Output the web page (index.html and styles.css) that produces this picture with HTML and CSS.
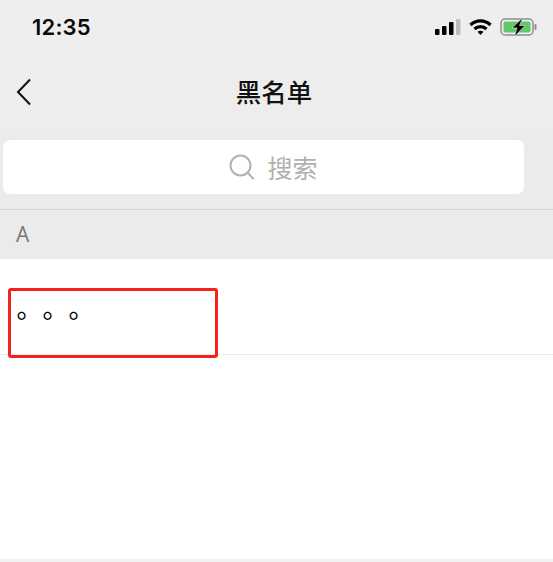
FILE: index.html
```html
<!DOCTYPE html>
<html lang="zh">
<head>
<meta charset="utf-8">
<title>黑名单</title>
<link rel="stylesheet" href="styles.css">
</head>
<body>
<div class="page">
  <header class="status">
    <span class="time">12:35</span>
    <div class="status-icons">
      <svg class="signal" width="26" height="16" viewBox="0 0 26 16"><rect x="0" y="10" width="4.500" height="6" rx="1" fill="#000"/><rect x="7" y="7" width="4.500" height="9" rx="1" fill="#000"/><rect x="14" y="3" width="4.500" height="13" rx="1" fill="#000"/><rect x="21" y="0" width="4.500" height="16" rx="1" fill="#bdbdbd"/></svg>
      <svg class="wifi" width="23" height="18" viewBox="0 0 23 18"><path d="M1.500 7C7 1.500 16 1.500 21.500 7" fill="none" stroke="#000" stroke-width="3.200"/><path d="M5.500 11C8.800 7.800 14.200 7.800 17.500 11" fill="none" stroke="#000" stroke-width="3.200"/><path d="M8.500 13.800C10.200 12.400 12.800 12.400 14.500 13.800L11.500 17Z" fill="#000"/></svg>
      <svg class="battery" width="37" height="20" viewBox="0 0 37 20"><rect x="1" y="2" width="32" height="16" rx="4" fill="none" stroke="#8e8e8e" stroke-width="1.500"/><rect x="3.500" y="4.500" width="27" height="11" rx="2" fill="#5fc965"/><rect x="34.500" y="7" width="2" height="6" rx="1" fill="#8e8e8e"/><path d="M23 0.500 12 11H17L14.500 19.500 25 8.500H19.500Z" fill="#000" stroke="#ededed" stroke-width="0.600"/></svg>
    </div>
  </header>
  <nav class="nav">
    <svg class="back" width="16" height="28" viewBox="0 0 16 28"><path d="M14 1.500 2 14 14 26.500" fill="none" stroke="#111" stroke-width="2"/></svg>
    <h1 class="title">黑名单</h1>
  </nav>
  <div class="search-wrap">
    <div class="search">
      <svg class="search-icon" width="26" height="26" viewBox="0 0 26 26"><circle cx="11.500" cy="11.500" r="10" fill="none" stroke="#b2b2b2" stroke-width="2"/><path d="M18.500 18.500 24.500 25" fill="none" stroke="#b2b2b2" stroke-width="2"/></svg>
      <span class="search-text">搜索</span>
    </div>
  </div>
  <div class="section">A</div>
  <main class="list">
    <div class="row">
      <span class="name">。。。</span>
      <div class="mark"></div>
    </div>
  </main>
  <div class="foot"></div>
</div>
</body>
</html>
```
FILE: styles.css
```css
* { box-sizing: border-box; margin: 0; padding: 0; }
html, body { height: 100%; overflow: hidden; }
body {
  background: #fff;
  font-family: "Liberation Sans", "Noto Sans CJK SC", sans-serif;
}
.page { width: 553px; height: 562px; display: flex; flex-direction: column; background: #ebebeb; }
.status { height: 54px; padding: 16px 16px 0 32px; display: flex; justify-content: space-between; align-items: flex-start; background: #eeeeee; }
.time { font-family: Inter, "Liberation Sans", sans-serif; font-size: 22px; line-height: 22px; font-weight: 600; letter-spacing: 0.2px; color: #0a0a0a; }
.status-icons { display: flex; align-items: center; gap: 8px; padding-top: 1px; }
.nav { height: 76px; display: flex; align-items: center; justify-content: center; position: relative; padding-right: 5px; background: #ededed; }
.back { position: absolute; left: 16px; top: 24px; }
.title { font-size: 25.500px; line-height: 34px; font-weight: 500; color: #111; font-family: "Noto Sans CJK SC", sans-serif; margin-top: -3px; }
.search-wrap { height: 80px; padding: 10px 29px 0 3px; border-bottom: 1px solid #d8d8d8; }
.search { height: 54px; background: #fff; border-radius: 7px; display: flex; align-items: center; justify-content: center; gap: 12px; padding-left: 20px; }
.search-text { font-family: "Noto Sans CJK SC", sans-serif; font-size: 25px; line-height: 34px; color: #b0b0b0; }
.section { height: 49px; padding: 0 0 2px 16px; display: flex; align-items: center; font-size: 21px; color: #777; font-family: "Open Sans", "Liberation Sans", sans-serif; }
.list { height: 300px; background: #fff; }
.row { height: 96px; border-bottom: 1px solid #ececec; position: relative; padding: 30px 0 0 16.500px; }
.name { font-family: "Noto Sans CJK SC", sans-serif; font-size: 26px; line-height: 36px; color: #000; display: block; text-spacing-trim: space-all; }
.mark { position: absolute; left: 8px; top: 29px; width: 210px; height: 70px; border: 3px solid #f5221b; border-radius: 3px; }
.foot { flex: 1; background: #f2f2f2; }
```
